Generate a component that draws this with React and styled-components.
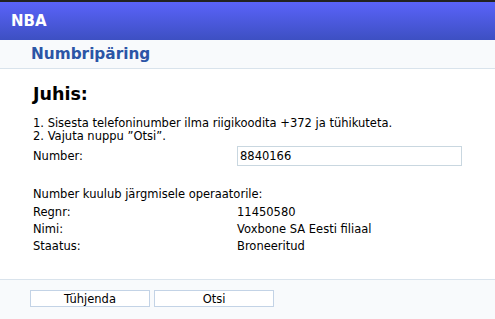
import React from "react";
import styled, { createGlobalStyle } from "styled-components";

const Global = createGlobalStyle`
  html, body { margin: 0; padding: 0; background: #fff; }
  body { font-family: "DejaVu Sans", "Liberation Sans", sans-serif; font-size: 11.5px; color: #000; }
`;

const Page = styled.div`
  width: 495px;
  height: 319px;
  display: flex;
  flex-direction: column;
  border-top: 2px solid #222;
  box-sizing: border-box;
`;

const Header = styled.div`
  height: 38px;
  background: linear-gradient(to bottom, #5a63fa, #3d50c2);
  color: #fff;
  font-weight: bold;
  font-size: 15px;
  display: flex;
  align-items: center;
  padding-left: 11px;
`;

const SubHeader = styled.div`
  height: 28px;
  background: #f8fafc;
  border-bottom: 1px solid #d9e3ec;
  color: #2b55a6;
  font-weight: bold;
  font-size: 15.3px;
  display: flex;
  align-items: center;
  padding-left: 31px;
`;

const Body = styled.div`
  flex: 1;
  padding: 14px 33px 0 33px;
`;

const Title = styled.h1`
  margin: 0 0 12px 0;
  font-size: 17.5px;
  font-weight: bold;
  line-height: 22px;
`;

const Instr = styled.div`
  line-height: 13px;
  white-space: nowrap;
`;

const Row = styled.div`
  display: grid;
  grid-template-columns: 204px 1fr;
  align-items: center;
  height: ${(p) => p.$h || 17}px;
  margin-top: ${(p) => p.$mt || 0}px;
  white-space: nowrap;
`;

const Caption = styled.div`
  height: 17px;
  line-height: 17px;
  margin-top: 19px;
  white-space: nowrap;
`;

const Input = styled.input`
  width: 225px;
  height: 20px;
  box-sizing: border-box;
  border: 1px solid #c9d7e0;
  font-family: inherit;
  font-size: 11.5px;
  padding: 0 2px;
  outline: none;
`;

const Footer = styled.div`
  height: 40px;
  background: #f8fafc;
  border-top: 1px solid #d9e3ec;
  display: flex;
  gap: 4px;
  padding: 10px 0 0 30px;
  box-sizing: border-box;
`;

const Button = styled.button`
  width: 120px;
  height: 17px;
  background: #fff;
  border: 1px solid #c3d3e6;
  font-family: inherit;
  font-size: 11.5px;
  padding: 0;
  color: #000;
`;

export default function App() {
  return (
    <Page>
      <Global />
      <Header>NBA</Header>
      <SubHeader>Numbripäring</SubHeader>
      <Body>
        <Title>Juhis:</Title>
        <Instr>1. Sisesta telefoninumber ilma riigikoodita +372 ja tühikuteta.</Instr>
        <Instr>2. Vajuta nuppu ”Otsi”.</Instr>
        <Row $h={22} $mt={2}>
          <span>Number:</span>
          <Input defaultValue="8840166" />
        </Row>
        <Caption>Number kuulub järgmisele operaatorile:</Caption>
        <Row>
          <span>Regnr:</span>
          <span>11450580</span>
        </Row>
        <Row>
          <span>Nimi:</span>
          <span>Voxbone SA Eesti filiaal</span>
        </Row>
        <Row>
          <span>Staatus:</span>
          <span>Broneeritud</span>
        </Row>
      </Body>
      <Footer>
        <Button>Tühjenda</Button>
        <Button>Otsi</Button>
      </Footer>
    </Page>
  );
}
